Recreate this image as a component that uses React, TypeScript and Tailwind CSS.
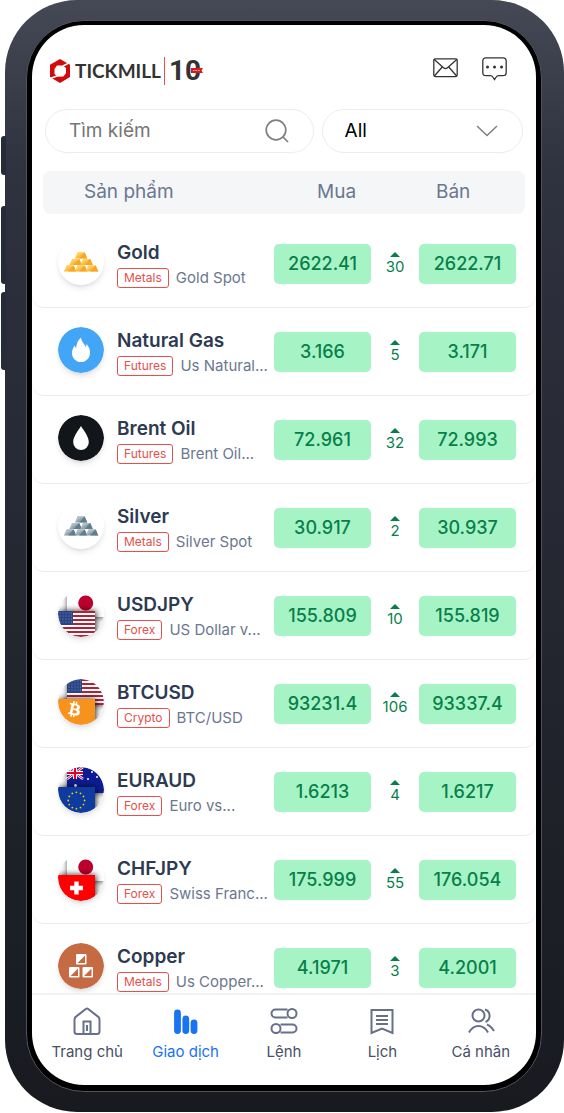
import React from "react"
import { FaBtc } from "react-icons/fa"

interface Product {
  name: string
  category: string
  description: string
  buy: string
  sell: string
  spread: number
  icon: React.ReactNode
}

function Bars({ light, dark, mid }: { light: string; dark: string; mid: string }) {
  const bars = [
    [17.5, 13.5],
    [12, 20],
    [23, 20],
    [6.5, 26.5],
    [17.5, 26.5],
    [28.5, 26.5],
  ]
  return (
    <>
      <circle cx="23" cy="23" r="23" fill="#fff" />
      {bars.map(([x, y]) => (
        <g key={`${x}-${y}`} transform={`translate(${x} ${y})`}>
          <path d="M2.2 0h7l2.6 6H-.5z" fill={mid} />
          <path d="M2.2 0h7L3 3-.5 6z" fill={light} />
          <path d="M9.2 0l2.6 6H3.5z" fill={dark} />
        </g>
      ))}
    </>
  )
}

function UsFlag({ x, y }: { x: number; y: number }) {
  return (
    <g transform={`translate(${x} ${y})`}>
      <rect width="37" height="26" fill="#fff" />
      {[0, 4, 8, 12, 16, 20, 24].map((top) => (
        <rect key={top} y={top} width="37" height="2" fill="#b22234" />
      ))}
      <rect width="15" height="14" fill="#2a4585" />
      {[2, 5, 8, 11].map((cy) =>
        [2, 5, 8, 11, 13.5].map((cx) => (
          <circle key={`${cx}-${cy}`} cx={cx} cy={cy} r=".5" fill="#fff" fillOpacity=".5" />
        ))
      )}
    </g>
  )
}

function JapanFlag() {
  return (
    <>
      <rect x="9" width="37" height="26" fill="#fff" />
      <circle cx="27.7" cy="12" r="7.5" fill="#bc002d" />
    </>
  )
}

function AustraliaFlag() {
  return (
    <>
      <rect x="9" width="37" height="26" fill="#0a1a94" />
      <path d="M9 0l16 12M25 0L9 12" stroke="#fff" strokeWidth="2.4" />
      <path d="M9 0l16 12M25 0L9 12" stroke="#e4002b" strokeWidth="1" />
      <path d="M17 0v12M9 6h16" stroke="#fff" strokeWidth="4" />
      <path d="M17 0v12M9 6h16" stroke="#e4002b" strokeWidth="2.2" />
      <circle cx="17.5" cy="18.5" r="1.5" fill="#fff" />
      <circle cx="34" cy="5" r="1" fill="#fff" />
      <circle cx="30" cy="12" r="1" fill="#fff" />
      <circle cx="39" cy="10" r="1" fill="#fff" />
      <circle cx="35" cy="21" r="1" fill="#fff" />
    </>
  )
}

function EuFlag() {
  const angles = Array.from({ length: 12 }, (_, i) => (i * Math.PI) / 6)
  return (
    <>
      <rect y="20" width="37" height="26" fill="#0b3aa0" />
      {angles.map((a) => (
        <circle key={a} cx={18.4 + 8.2 * Math.cos(a)} cy={33.5 + 8.2 * Math.sin(a)} r=".9" fill="#ffcc00" />
      ))}
    </>
  )
}

function SwissFlag() {
  return (
    <>
      <rect y="20" width="37" height="26" fill="#ff0000" />
      <path d="M18.5 26.5v13M12 33h13" stroke="#fff" strokeWidth="4.4" />
    </>
  )
}

function BitcoinFlag() {
  return (
    <>
      <rect y="20" width="37" height="26" fill="#f7931a" />
      <g transform="rotate(12 17 33)">
        <FaBtc x="8" y="22.5" width="18" height="21" color="#fff" />
      </g>
    </>
  )
}

function Pair({ id, back, front }: { id: string; back: React.ReactNode; front: React.ReactNode }) {
  return (
    <>
      <clipPath id={`${id}-clip`}>
        <circle cx="23" cy="23" r="23" />
      </clipPath>
      <filter id={`${id}-shadow`} x="-30%" y="-30%" width="160%" height="160%">
        <feDropShadow dx="1" dy="0" stdDeviation="3" floodColor="#000" floodOpacity=".85" />
      </filter>
      <circle cx="23" cy="23" r="23" fill="#fff" />
      <g clipPath={`url(#${id}-clip)`}>
        <g filter={`url(#${id}-shadow)`}>{back}</g>
        <g filter={`url(#${id}-shadow)`}>{front}</g>
      </g>
    </>
  )
}

const products: Product[] = [
  {
    name: "Gold",
    category: "Metals",
    description: "Gold Spot",
    buy: "2622.41",
    sell: "2622.71",
    spread: 30,
    icon: <Bars light="#ffd05a" mid="#fdbb3c" dark="#f7a62b" />,
  },
  {
    name: "Natural Gas",
    category: "Futures",
    description: "Us Natural...",
    buy: "3.166",
    sell: "3.171",
    spread: 5,
    icon: (
      <>
        <circle cx="23" cy="23" r="23" fill="#42a5f5" />
        <path
          d="M23 10.5c.3 2.8 1.6 4.6 3.4 7 .5.7.9 1.5 1.1 2.4.8-.7 1.2-1.6 1.2-2.8 2.2 2.8 3.5 5.8 3.3 9.1-.2 5-4 8.8-9 8.8s-8.9-3.8-9-8.8c-.1-3.2 1.2-5.5 3-7.9.1 1.3.4 2.2 1.2 3 .1-4 1.6-8.2 4.8-10.8z"
          fill="#fff"
        />
      </>
    ),
  },
  {
    name: "Brent Oil",
    category: "Futures",
    description: "Brent Oil...",
    buy: "72.961",
    sell: "72.993",
    spread: 32,
    icon: (
      <>
        <circle cx="23" cy="23" r="23" fill="#12161a" />
        <path d="M23 11c3 5 7.8 10.5 7.8 16.2a7.8 7.8 0 0 1-15.6 0C15.2 21.5 20 16 23 11z" fill="#fff" />
      </>
    ),
  },
  {
    name: "Silver",
    category: "Metals",
    description: "Silver Spot",
    buy: "30.917",
    sell: "30.937",
    spread: 2,
    icon: <Bars light="#b0bec5" mid="#90a4ae" dark="#607d8b" />,
  },
  {
    name: "USDJPY",
    category: "Forex",
    description: "US Dollar v...",
    buy: "155.809",
    sell: "155.819",
    spread: 10,
    icon: <Pair id="usdjpy" back={<JapanFlag />} front={<UsFlag x={0} y={20} />} />,
  },
  {
    name: "BTCUSD",
    category: "Crypto",
    description: "BTC/USD",
    buy: "93231.4",
    sell: "93337.4",
    spread: 106,
    icon: <Pair id="btcusd" back={<UsFlag x={9} y={0} />} front={<BitcoinFlag />} />,
  },
  {
    name: "EURAUD",
    category: "Forex",
    description: "Euro vs...",
    buy: "1.6213",
    sell: "1.6217",
    spread: 4,
    icon: <Pair id="euraud" back={<AustraliaFlag />} front={<EuFlag />} />,
  },
  {
    name: "CHFJPY",
    category: "Forex",
    description: "Swiss Franc...",
    buy: "175.999",
    sell: "176.054",
    spread: 55,
    icon: <Pair id="chfjpy" back={<JapanFlag />} front={<SwissFlag />} />,
  },
  {
    name: "Copper",
    category: "Metals",
    description: "Us Copper...",
    buy: "4.1971",
    sell: "4.2001",
    spread: 3,
    icon: (
      <>
        <circle cx="23" cy="23" r="23" fill="#c56a42" />
        <rect x="18" y="11" width="10.5" height="10.5" rx="1" fill="#fff" />
        <rect x="11" y="24" width="10.5" height="10.5" rx="1" fill="#fff" />
        <rect x="24.5" y="24" width="10.5" height="10.5" rx="1" fill="#fff" />
        <path d="M27 12.5V20h-7.5zM20 25.5V33h-7.5zM33.5 25.5V33H26z" fill="#c56a42" />
      </>
    ),
  },
]

const tabs = [
  {
    label: "Trang chủ",
    icon: (
      <>
        <path d="M1.5 12.5q0-1.8 1.5-2.9L12.8 2q1.2-.8 2.4 0L25 9.6q1.5 1.1 1.5 2.9v12q0 2.5-2.5 2.5H4q-2.5 0-2.5-2.5z" />
        <path d="M10.5 27V14.500h7V27M14 18v6" />
      </>
    ),
  },
  {
    label: "Giao dịch",
    active: true,
    icon: <path d="M5.5 6v17.500M13.8 12v11.5M22 16v7.5" strokeWidth="6.8" strokeLinecap="round" />,
  },
  {
    label: "Lệnh",
    icon: (
      <>
        <path d="M17.5 2.5H5.5a4 4 0 0 0 0 8h12M10.5 17.500h12a4 4 0 0 1 0 8h-12" />
        <circle cx="22" cy="6.500" r="4.500" />
        <circle cx="6" cy="21.500" r="4.500" />
      </>
    ),
  },
  {
    label: "Lịch",
    icon: (
      <>
        <path d="M3.5 3h21v23L14 21.5 3.5 26z" />
        <path d="M8 9h12M8 13h12M8 17h12" />
      </>
    ),
  },
  {
    label: "Cá nhân",
    icon: (
      <>
        <circle cx="11.5" cy="8.5" r="6" />
        <path d="M2 25.5c2.5-4.5 6-6.5 9.5-6.5s7 2 9.5 6.5M18 2.5c6 2 6 10 .5 12.5M20 17.5c3 1 5 3.5 7 6.5" />
      </>
    ),
  },
]

function Logo() {
  return (
    <div className="flex items-center">
      <svg viewBox="0 0 20 24" className="mr-[5px] h-6 w-5" aria-hidden="true">
        <path
          fillRule="evenodd"
          d="M10 0l10 5.8V18l-10 6L0 18V5.8zM7 6.500L4.500 10v5l3 2.800 6-.3L16 14V9l-3-2.500z"
          fill="#d20a0a"
        />
        <path d="M13 7l7-3.500M0 19.500L7 17" stroke="#fff" strokeWidth="1.5" />
      </svg>
      <span className="font-[Lato] text-[19px] leading-6 font-bold text-[#333]">TICKMILL</span>
      <span className="mr-1 ml-[3px] h-7 w-px bg-[#e05252]" />
      <span className="relative font-[Roboto,sans-serif] text-[28px] leading-7 font-bold text-[#333]">
        10
        <svg viewBox="0 0 12 6" className="absolute top-[11px] right-[-2px] h-[6px] w-3" aria-hidden="true">
          <path d="M0 0h12l-1.500 2.500L12 5H0z" fill="#d81b1b" />
          <path d="M2 2.500h7" stroke="#fff" strokeOpacity=".7" strokeDasharray="1 .6" />
        </svg>
      </span>
    </div>
  )
}

function ProductRow({ product }: { product: Product }) {
  return (
    <tr className="flex h-[88px] shrink-0 items-center rounded-b-xl border-b border-[#eaebee] pr-5 pl-[26px]">
      <td className="flex h-[50px] min-w-0 flex-1 gap-[13px]">
        <svg viewBox="0 0 46 46" className="size-[46px] shrink-0 rounded-full shadow-md" aria-hidden="true">
          {product.icon}
        </svg>
        <div className="flex min-w-0 flex-col gap-[3px] pt-[2px]">
          <span className="text-[19px] leading-6 font-semibold text-[#2d3a52]">{product.name}</span>
          <div className="flex items-center gap-[7px]">
            <span className="rounded-[3px] border border-[#e5504d] px-[6px] text-[12px] leading-[18px] text-[#e5504d]">
              {product.category}
            </span>
            <span className="text-[15px] leading-5 whitespace-nowrap text-[#6b7790]">{product.description}</span>
          </div>
        </div>
      </td>
      <td className="w-[97px]">
        <button type="button" className="h-10 w-full rounded-[5px] bg-[#a6f4c5] text-[18px] font-medium text-[#087f4b]">
          {product.buy}
        </button>
      </td>
      <td className="flex w-12 flex-col items-center gap-px text-[15px] leading-[18px] text-[#087f4b]">
        <svg viewBox="0 0 10 5" className="h-[5px] w-[10px]" aria-hidden="true">
          <path d="M5 0l5 5H0z" fill="currentColor" />
        </svg>
        {product.spread}
      </td>
      <td className="w-[97px]">
        <button type="button" className="h-10 w-full rounded-[5px] bg-[#a6f4c5] text-[18px] font-medium text-[#087f4b]">
          {product.sell}
        </button>
      </td>
    </tr>
  )
}

function Screen() {
  return (
    <div className="flex min-h-0 flex-1 flex-col overflow-hidden rounded-[52px] bg-white">
      <header className="flex items-start justify-between pt-8 pr-[29px] pl-[18px]">
        <Logo />
        <div className="flex gap-6 text-[#333]">
          <button type="button" aria-label="Mail">
            <svg viewBox="0 0 25 24" className="h-6 w-[25px]" fill="none" stroke="currentColor" strokeWidth="1.3">
              <rect x=".8" y="1.8" width="23.4" height="17.8" rx="1.5" />
              <path d="M1 2.200l9.500 8.500q2 1.800 4 0L24 2.200M1.200 19.200l8-9.200M23.800 19.200l-8-9.200" />
            </svg>
          </button>
          <button type="button" aria-label="Chat">
            <svg viewBox="0 0 25 24" className="h-6 w-[25px]" fill="none" stroke="currentColor" strokeWidth="1.3">
              <path d="M4 .8h17q3.200 0 3.200 3.200v11.500q0 3.200-3.200 3.200h-4.500q-1.500 0-2.300 1.300L12.500 22.500 10.800 20q-.8-1.300-2.300-1.300H4Q.8 18.700.8 15.500V4Q.8.8 4 .8z" />
              <path d="M5.500 10h.01M12.500 10h.01M19.500 10h.01" strokeWidth="3" strokeLinecap="round" />
            </svg>
          </button>
        </div>
      </header>

      <div className="grid grid-cols-[4fr_3fr] gap-2 px-[13px] pt-6">
        <label className="flex h-11 min-w-0 items-center rounded-full border border-[#ebecef] pr-6 pl-[23px]">
          <input
            type="text"
            placeholder="Tìm kiếm"
            aria-label="Tìm kiếm"
            className="w-full min-w-0 text-[19px] outline-none placeholder:text-[#757575]"
          />
          <svg viewBox="0 0 24 24" className="size-6 shrink-0" fill="none" stroke="#808080" strokeWidth="1.7">
            <circle cx="11" cy="11" r="9.8" />
            <path d="M18 18l5 5" />
          </svg>
        </label>
        <label className="flex h-11 min-w-0 items-center rounded-full border border-[#ebecef] pr-6 pl-[22px]">
          <select aria-label="Loại" className="w-full appearance-none text-[19px] text-black outline-none">
            <option>All</option>
          </select>
          <svg viewBox="0 0 22 12" className="h-3 w-[22px] shrink-0" fill="none" stroke="#808080" strokeWidth="1.5">
            <path d="M1 1l10 9.500L21 1" />
          </svg>
        </label>
      </div>

      <table className="mt-[18px] flex min-h-0 flex-1 flex-col">
        <thead className="block px-[11px]">
          <tr className="flex h-[43px] items-center rounded-lg bg-[#f4f6f8] pl-[41px] text-left text-[19px] text-[#6b7790]">
            <th className="flex-1 font-normal">Sản phẩm</th>
            <th className="w-[119px] font-normal">Mua</th>
            <th className="w-[89px] font-normal">Bán</th>
          </tr>
        </thead>
        <tbody className="mt-[6px] flex min-h-0 flex-1 flex-col overflow-y-auto [scrollbar-width:none]">
          {products.map((product) => (
            <ProductRow key={product.name} product={product} />
          ))}
        </tbody>
      </table>

      <nav className="flex h-[92px] shrink-0 border-t-2 border-[#f1f2f4] px-[6px] pt-3">
        {tabs.map((tab) => (
          <a
            key={tab.label}
            href="#"
            className={
              tab.active
                ? "flex flex-1 flex-col items-center gap-[7px] text-[#1a73f0]"
                : "flex flex-1 flex-col items-center gap-[7px] text-[#475066]"
            }
          >
            <svg
              viewBox="0 0 28 28"
              className="size-7"
              fill="none"
              stroke={tab.active ? "#1a73f0" : "#66708a"}
              strokeWidth="2"
              aria-hidden="true"
            >
              {tab.icon}
            </svg>
            <span className="text-[15px] leading-5">{tab.label}</span>
          </a>
        ))}
      </nav>
    </div>
  )
}

export default function App() {
  return (
    <div className="relative h-screen bg-white pb-px pl-[5px] font-[Inter,sans-serif]">
      {/* side buttons */}
      <div className="absolute top-[136px] left-[1px] h-[39px] w-[5px] rounded-l-[3px] bg-[#252b38]" />
      <div className="absolute top-[206px] left-[1px] h-[78px] w-[5px] rounded-l-[3px] bg-[#252b38]" />
      <div className="absolute top-[292px] left-[1px] h-[78px] w-[5px] rounded-l-[3px] bg-[#252b38]" />
      <div className="flex h-full flex-col rounded-[72px] bg-linear-to-b from-[#454955] via-[#2f323f] via-15% to-[#181a20] pt-5 pr-[22px] pb-5 pl-[21px]">
        <div className="flex min-h-0 flex-1 flex-col rounded-[58px] border border-[#50535e] bg-black px-[5px] pt-1 pb-[6px]">
          <Screen />
        </div>
      </div>
    </div>
  )
}
